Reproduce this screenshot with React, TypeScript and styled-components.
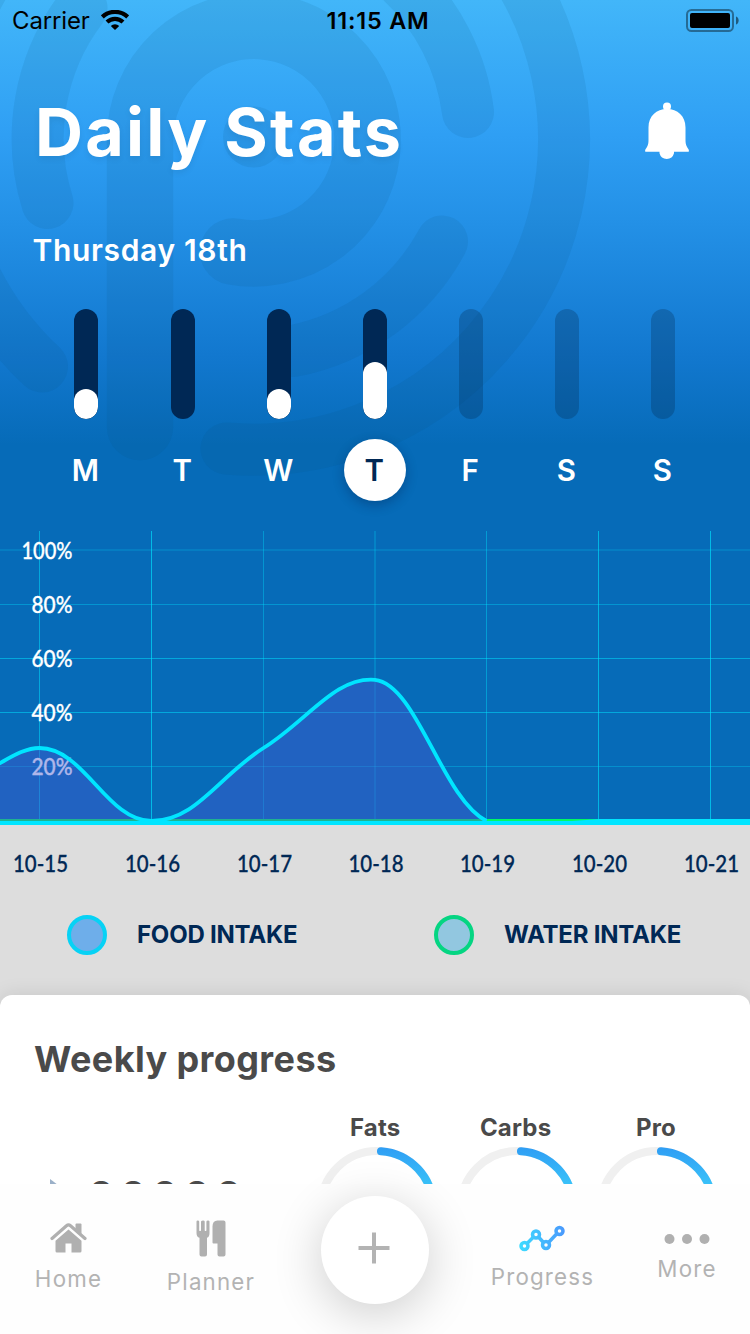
import React from "react";
import styled, { createGlobalStyle } from "styled-components";

const sans = `Inter, "Liberation Sans", sans-serif`;
const humanist = `Lato, "Open Sans", sans-serif`;
const navy = "#002855";

const GlobalStyle = createGlobalStyle`
  * { box-sizing: border-box; }
  body { margin: 0; background: #fff; font-family: ${sans}; }
  svg { display: block; }
`;

const Screen = styled.div`
  position: relative;
  width: 750px;
  height: 1334px;
  overflow: hidden;
  display: flex;
  flex-direction: column;
  background: #dddddd;
`;

const Hero = styled.section`
  position: relative;
  flex: none;
  height: 531px;
  background: linear-gradient(
    180deg,
    #42b6f9 0px,
    #2f9ff4 135px,
    #2390e6 225px,
    #1278cf 355px,
    #066bb8 445px
  );
`;

const Watermark = styled.svg`
  position: absolute;
  inset: 0;
`;

const HeroContent = styled.div`
  position: relative;
  display: flex;
  flex-direction: column;
`;

const StatusBar = styled.header`
  display: grid;
  grid-template-columns: 1fr auto 1fr;
  align-items: center;
  height: 40px;
  padding: 0 11px 0 12px;
  color: #000;
  font-size: 24px;
  line-height: 38px;
`;

const CarrierGroup = styled.div`
  display: flex;
  align-items: center;
  gap: 11px;
  letter-spacing: -0.15px;
  padding-top: 2px;

  svg {
    margin-top: -2px;
  }
`;

const Clock = styled.time`
  font-weight: 600;
  font-size: 23.5px;
  letter-spacing: 0.8px;
  padding: 2px 0 0 5px;
`;

const BatterySlot = styled.div`
  justify-self: end;
`;

const TitleRow = styled.div`
  display: flex;
  justify-content: space-between;
  padding: 52px 60px 0 35px;
  height: 180px;
`;

const Title = styled.h1`
  margin: 0;
  color: #fff;
  font-weight: 700;
  font-size: 66.5px;
  line-height: 80px;
  letter-spacing: 2.2px;
  word-spacing: -3px;
  text-shadow: 0 3px 6px rgba(0, 0, 0, 0.07);
`;

const BellButton = styled.button`
  border: 0;
  padding: 10px 0 0;
  background: none;
  align-self: flex-start;
`;

const DateLine = styled.p`
  margin: 0 0 0 32.5px;
  height: 89px;
  color: #fff;
  font-weight: 600;
  font-size: 30px;
  line-height: 61px;
  letter-spacing: 0.65px;
`;

const WeekRow = styled.div`
  display: grid;
  grid-template-columns: repeat(7, 96px);
  padding-left: 39px;
`;

const Day = styled.div`
  display: flex;
  flex-direction: column;
  align-items: center;
  gap: 20px;

  &:first-child {
    margin: 0 1px 0 -1px;
  }
`;

const Meter = styled.div<{ $future?: boolean }>`
  display: flex;
  align-items: flex-end;
  width: 24px;
  height: 110px;
  border-radius: 12px;
  overflow: hidden;
  background: ${(p) => (p.$future ? "rgba(0, 32, 62, 0.25)" : navy)};
`;

const MeterFill = styled.div`
  width: 24px;
  border-radius: 12px;
  background: #fff;
`;

const DayBadge = styled.div<{ $active?: boolean }>`
  width: 62px;
  height: 62px;
  padding-right: 1.5px;
  border-radius: 31px;
  text-align: center;
  font-weight: 600;
  font-size: 29.5px;
  line-height: 63px;
  color: ${(p) => (p.$active ? navy : "#fff")};
  background: ${(p) => (p.$active ? "#fff" : "transparent")};
  box-shadow: ${(p) => (p.$active ? "0 4px 12px rgba(0, 20, 60, 0.3)" : "none")};
`;

const ChartPanel = styled.section`
  flex: none;
  height: 369px;
`;

const Legend = styled.div`
  flex: none;
  display: grid;
  grid-template-columns: 367px 1fr;
  height: 95px;
  padding: 15px 0 0 67px;
`;

const LegendItem = styled.div`
  display: flex;
  gap: 30px;
  height: 40px;
  color: ${navy};
  font-weight: 700;
  font-size: 24px;
  line-height: 40px;
  letter-spacing: -0.22px;
`;

const Swatch = styled.span<{ $ring: string; $fill: string }>`
  width: 40px;
  height: 40px;
  border-radius: 50%;
  border: 4px solid ${(p) => p.$ring};
  background: ${(p) => p.$fill};
`;

const Card = styled.section`
  flex: none;
  height: 189px;
  border-radius: 12px 12px 0 0;
  background: #fff;
  box-shadow: 0 0 20px rgba(0, 0, 0, 0.1);
  color: #4a4a4a;
  overflow: hidden;
`;

const CardTitle = styled.h2`
  margin: 0;
  padding: 40px 0 0 34px;
  height: 118px;
  font-weight: 700;
  font-size: 36px;
  line-height: 48px;
  letter-spacing: 0.4px;
`;

const CardBody = styled.div`
  display: grid;
  grid-template-columns: 305px repeat(3, 140.4px);
`;

const CountRow = styled.div`
  display: flex;
  align-items: flex-start;
  gap: 28px;
  padding: 64px 0 0 50px;
`;

const Count = styled.span`
  margin-top: -6px;
  font-weight: 700;
  font-size: 39px;
  line-height: 50px;
  letter-spacing: 5.6px;
`;

const Macro = styled.div`
  display: flex;
  flex-direction: column;
  align-items: center;
  padding-top: 1px;
  font-weight: 700;
  font-size: 24px;
  line-height: 28px;
  letter-spacing: 0.2px;
  gap: 5px;

  svg {
    margin-left: 3px;
  }
`;

const TabBar = styled.nav`
  position: relative;
  flex: none;
  height: 150px;
  display: grid;
  grid-template-columns: 136px 149px 180px 154px 135px;
  background: #fefefe;
`;

const Tab = styled.div<{ $top: number; $gap: number }>`
  display: flex;
  flex-direction: column;
  align-items: center;
  padding-top: ${(p) => p.$top}px;
  gap: ${(p) => p.$gap}px;
  color: #b3b3b3;
  font-size: 22.3px;
  font-weight: 400;
  line-height: 28px;
  letter-spacing: 1.2px;
  text-indent: 1px;
`;

const AddButton = styled.button`
  justify-self: center;
  display: flex;
  align-items: center;
  justify-content: center;
  width: 108px;
  height: 108px;
  margin-top: 12px;
  padding: 0 2px 5px 0;
  border: 0;
  border-radius: 54px;
  background: #fff;
  box-shadow: 0 10px 50px rgba(0, 0, 0, 0.2);
`;

const days = [
  { name: "M", fill: 30 },
  { name: "T", fill: 0 },
  { name: "W", fill: 30 },
  { name: "T", fill: 57, active: true },
  { name: "F", fill: 0, future: true },
  { name: "S", fill: 0, future: true },
  { name: "S", fill: 0, future: true },
];

const columns = [
  { date: "10-15", x: 39.5, o: 0.5, w: 1 },
  { date: "10-16", x: 151.5, o: 0.65, w: 1 },
  { date: "10-17", x: 263.5, o: 0.35, w: 1 },
  { date: "10-18", x: 375, o: 0.2, w: 2 },
  { date: "10-19", x: 486.5, o: 0.4, w: 1 },
  { date: "10-20", x: 598.5, o: 0.6, w: 1 },
  { date: "10-21", x: 710.5, o: 0.65, w: 1 },
];

const rows = [
  { label: "100%", y: 19, o: 0.15, w: 2 },
  { label: "80%", y: 73.5, o: 0.35, w: 1 },
  { label: "60%", y: 127.5, o: 0.5, w: 1 },
  { label: "40%", y: 181.5, o: 0.5, w: 1 },
  { label: "20%", y: 235.5, o: 0.3, w: 1 },
];

const curve =
  "M-2 233.2C12 225.5 25 217 39.5 217C84.3 217 106.7 290 151.5 290C196 290 218.7 245.2 263.5 217C308.3 188.8 335 145.5 375 148.8C417 153.5 441.7 267 486.5 290";

const Rings = () => (
  <Watermark width="750" height="531" viewBox="0 0 750 531" fill="none" stroke="#0a5078" strokeOpacity="0.1" strokeLinecap="round">
    <circle cx="253.5" cy="137" r="30.5" fill="#0a5078" fillOpacity="0.1" stroke="none" />
    <path strokeWidth="66.5" d="M140 427V139A113.8 113.8 0 1 1 233 251.5" />
    <path strokeWidth="52" d="M47.5 203A216 216 0 0 1 81.5 8" />
    <path strokeWidth="52" d="M253.5 -77A216 216 0 0 1 468 112" />
    <path strokeWidth="52" d="M442 241.5A216 216 0 0 1 293 351" />
    <path strokeWidth="52" d="M42 366.500A310.500 310.500 0 1 1 226.500 448.500" />
  </Watermark>
);

const Wifi = () => (
  <svg width="28" height="20" viewBox="0 0 28 20" fill="none" stroke="#000" strokeWidth="4.200">
    <path d="M1.300 6.900A18.500 18.500 0 0 1 26.700 6.900" />
    <path d="M6 12.100A11.600 11.600 0 0 1 22 12.100" />
    <path d="M14 20L9.800 15.900A6 6 0 0 1 18.200 15.900Z" fill="#000" stroke="none" />
  </svg>
);

const Battery = () => (
  <svg width="53" height="23" viewBox="0 0 53 23">
    <rect x="1" y="1" width="46" height="21" rx="4.500" fill="none" stroke="#000" strokeOpacity="0.4" strokeWidth="2" />
    <rect x="4" y="4" width="40" height="15" rx="2" />
    <path d="M50 7.500C53.500 8.500 53.500 14.500 50 15.500Z" fillOpacity="0.5" />
  </svg>
);

const Bell = () => (
  <svg width="46" height="59" viewBox="0 0 46 58" preserveAspectRatio="none" fill="#fff">
    <circle cx="23" cy="4.500" r="4" />
    <path d="M23 7C33.500 7 41.500 14 41.500 25V37C41.500 42 42.500 43.500 44.500 46.500Q45.500 49 44 49H30V50.500A7.500 7.500 0 0 1 15.500 50.500V49H2Q.5 49 1.500 46.500C3.500 43.500 4.500 42 4.500 37V25C4.500 14 12.500 7 23 7Z" />
  </svg>
);

const Chart = () => (
  <svg width="750" height="369" viewBox="0 0 750 369">
    <rect width="750" height="294" fill="#066bb8" />
    {columns.map((c) => (
      <line key={c.x} x1={c.x} x2={c.x} y1="0" y2="289" stroke="#00e5ff" strokeOpacity={c.o} strokeWidth={c.w} />
    ))}
    {rows.map((r) => (
      <line key={r.y} x1="0" x2="750" y1={r.y} y2={r.y} stroke="#00e5ff" strokeOpacity={r.o} strokeWidth={r.w} />
    ))}
    <g fill="#fff" stroke="#fff" strokeWidth="0.300" fontFamily={humanist} fontSize="23" fontWeight="500" textAnchor="end">
      {rows.map((r) => (
        <text
          key={r.label}
          x="72.500"
          y={Math.floor(r.y) + 8.5}
          textLength={r.label.length === 4 ? 51 : 41}
          lengthAdjust="spacingAndGlyphs"
        >
          {r.label}
        </text>
      ))}
    </g>
    <rect x="0" y="288" width="600" height="3" fill="#00fa64" />
    <path d={`${curve}L486 291H-2Z`} fill="rgb(69,86,207)" fillOpacity="0.430" />
    <rect x="0" y="290" width="750" height="4" fill="#00e5ff" />
    <path d="M565 290.500L600 288H750V294H565Z" fill="#00e5ff" />
    <path d={curve} fill="none" stroke="#00e5ff" strokeWidth="3.800" />
    <g fill={navy} stroke={navy} strokeWidth="0.300" fontFamily={humanist} fontSize="23" fontWeight="500" textAnchor="middle">
      {columns.map((c) => (
        <text key={c.date} x={c.x + 1} y="340.500" textLength="55" lengthAdjust="spacingAndGlyphs">
          {c.date}
        </text>
      ))}
    </g>
  </svg>
);

const Ring = () => (
  <svg width="120" height="120" viewBox="0 0 120 120" fill="none" strokeWidth="8">
    <defs>
      <linearGradient id="macro" x1="0" y1="0" x2="0" y2="60" gradientUnits="userSpaceOnUse">
        <stop offset="0" stopColor="#2f9df4" />
        <stop offset="1" stopColor="#40d8fc" />
      </linearGradient>
    </defs>
    <circle cx="60" cy="60" r="56" stroke="#f0f0f0" />
    <path d="M64 4.150A56 56 0 0 1 116 60" stroke="url(#macro)" strokeLinecap="round" />
  </svg>
);

const House = () => (
  <svg width="37" height="30" viewBox="0 0 37 30" fill="#b0b0b0">
    <path d="M2 15.500L16.500 2.700Q18.500 1 20.500 2.700L35 15.500" fill="none" stroke="#b0b0b0" strokeWidth="3.200" strokeLinecap="round" />
    <path d="M25.500 1.500Q25.500 .5 26.500 .5H30.500Q31.500 .5 31.500 1.500V11L25.500 5.800Z" />
    <path d="M18.500 6.500L31.500 17.800V28Q31.500 29.500 30 29.500H21.500V20.500H15.500V29.500H7Q5.500 29.500 5.500 28V17.800Z" />
  </svg>
);

const Cutlery = () => (
  <svg width="30" height="37" viewBox="0 0 30 37" fill="#b0b0b0">
    <path d="M.5 1.500Q.5 .5 1.800 .5T3.200 1.500V10.500Q4.100 11.500 5 10.500V1.500Q5.500 .5 7.100 .5T8.700 1.500V10.500Q9.500 11.500 10.400 10.500V1.500Q10.600 .5 12 .5T13.500 1.500V13Q13.500 17 11 17.700V34.500Q11 36.500 9 36.500H5.500Q3.500 36.500 3.500 34.500V17.700Q.5 17 .5 13Z" />
    <path d="M21.500 .5H27.500Q29.500 .5 29.500 2.500V34.500Q29.500 36.500 27.500 36.500H23.500Q21.500 36.500 21.500 34.500V23.500H17.500Q16.500 23.500 16.500 22.500V6.500Q16.500 .5 21.500 .5Z" />
  </svg>
);

const Plus = () => (
  <svg width="32" height="32" viewBox="0 0 32 32" stroke="#b3b3b3" strokeWidth="4">
    <path d="M16 .5V31.500M.5 16H31.500" />
  </svg>
);

const ProgressIcon = () => (
  <svg width="46" height="27" viewBox="0 0 46 27" fill="none" stroke="url(#trend)" strokeWidth="3.500">
    <defs>
      <linearGradient id="trend" x1="0" y1="0" x2="46" y2="0" gradientUnits="userSpaceOnUse">
        <stop offset="0" stopColor="#3ddcff" />
        <stop offset="1" stopColor="#4a98fc" />
      </linearGradient>
    </defs>
    <circle cx="5.500" cy="21" r="3.500" />
    <circle cx="17" cy="9.500" r="3.500" />
    <circle cx="27" cy="20" r="3.500" />
    <circle cx="40.500" cy="6" r="3.500" />
    <path d="M8 18.500L14.500 12M19.500 12L24.500 17.500M29.500 17.500L38 8.500" />
  </svg>
);

const Dots = () => (
  <svg width="46" height="10" viewBox="0 0 46 10" fill="#b0b0b0">
    <circle cx="5.500" cy="5" r="5" />
    <circle cx="23" cy="5" r="5" />
    <circle cx="40.500" cy="5" r="5" />
  </svg>
);

const Arrow = () => (
  <svg width="10" height="30" viewBox="0 0 10 30" fill="#9bb0c8">
    <path d="M0 2L10 9.500V30H0Z" />
  </svg>
);

export default function App() {
  return (
    <Screen>
      <GlobalStyle />
      <Hero>
        <Rings />
        <HeroContent>
          <StatusBar>
            <CarrierGroup>
              Carrier
              <Wifi />
            </CarrierGroup>
            <Clock>11:15 AM</Clock>
            <BatterySlot>
              <Battery />
            </BatterySlot>
          </StatusBar>
          <TitleRow>
            <Title>Daily Stats</Title>
            <BellButton aria-label="Notifications">
              <Bell />
            </BellButton>
          </TitleRow>
          <DateLine>Thursday 18th</DateLine>
          <WeekRow>
            {days.map((d, i) => (
              <Day key={i}>
                <Meter $future={d.future}>
                  {d.fill > 0 && <MeterFill style={{ height: d.fill }} />}
                </Meter>
                <DayBadge $active={d.active}>{d.name}</DayBadge>
              </Day>
            ))}
          </WeekRow>
        </HeroContent>
      </Hero>
      <ChartPanel>
        <Chart />
      </ChartPanel>
      <Legend>
        <LegendItem>
          <Swatch $ring="#07d2f5" $fill="#6eaeea" />
          FOOD INTAKE
        </LegendItem>
        <LegendItem>
          <Swatch $ring="#05d582" $fill="#92c7e0" />
          WATER INTAKE
        </LegendItem>
      </Legend>
      <Card>
        <CardTitle>Weekly progress</CardTitle>
        <CardBody>
          <CountRow>
            <Arrow />
            <Count>00000</Count>
          </CountRow>
          {["Fats", "Carbs", "Pro"].map((m) => (
            <Macro key={m}>
              {m}
              <Ring />
            </Macro>
          ))}
        </CardBody>
      </Card>
      <TabBar>
        <Tab $top={39} $gap={12}>
          <House />
          Home
        </Tab>
        <Tab $top={36} $gap={11}>
          <Cutlery />
          Planner
        </Tab>
        <AddButton aria-label="Add">
          <Plus />
        </AddButton>
        <Tab $top={41} $gap={11}>
          <ProgressIcon />
          Progress
        </Tab>
        <Tab $top={50} $gap={11}>
          <Dots />
          More
        </Tab>
      </TabBar>
    </Screen>
  );
}
